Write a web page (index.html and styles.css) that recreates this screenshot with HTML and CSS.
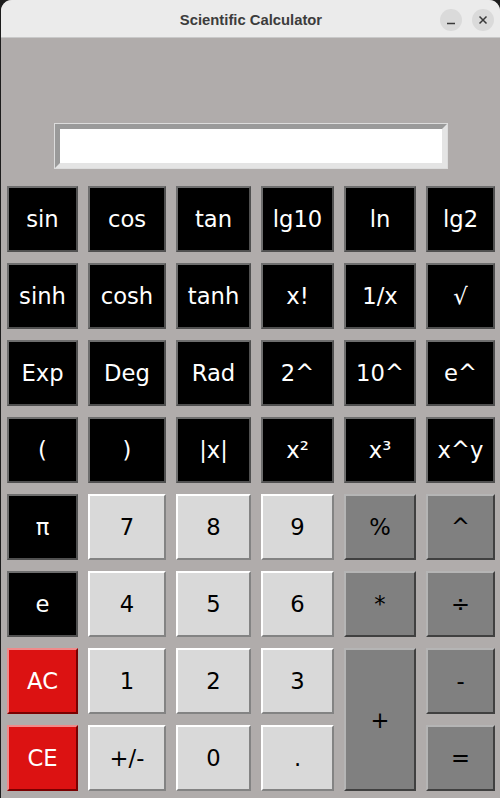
FILE: index.html
```html
<!DOCTYPE html>
<html>
<head>
<meta charset="utf-8">
<link rel="stylesheet" href="styles.css">
</head>
<body>
<div class="window">
  <div class="titlebar">
    <span class="title">Scientific Calculator</span>
    <div class="controls">
      <span class="ctl"><svg width="22" height="22" viewBox="0 0 22 22"><line x1="7" y1="14.5" x2="15" y2="14.5" stroke="#3a3a3a" stroke-width="1.5"/></svg></span>
      <span class="ctl"><svg width="22" height="22" viewBox="0 0 22 22"><path d="M7.5 7.5 L14.5 14.5 M14.5 7.5 L7.5 14.5" stroke="#3a3a3a" stroke-width="1.5"/></svg></span>
    </div>
  </div>
  <div class="main">
    <div class="display"><div class="field"></div></div>
    <div class="keys">
      <button class="k dark">sin</button>
      <button class="k dark">cos</button>
      <button class="k dark">tan</button>
      <button class="k dark">lg10</button>
      <button class="k dark">ln</button>
      <button class="k dark">lg2</button>

      <button class="k dark">sinh</button>
      <button class="k dark">cosh</button>
      <button class="k dark">tanh</button>
      <button class="k dark">x!</button>
      <button class="k dark">1/x</button>
      <button class="k dark">√</button>

      <button class="k dark">Exp</button>
      <button class="k dark">Deg</button>
      <button class="k dark">Rad</button>
      <button class="k dark">2^</button>
      <button class="k dark">10^</button>
      <button class="k dark">e^</button>

      <button class="k dark">(</button>
      <button class="k dark">)</button>
      <button class="k dark">|x|</button>
      <button class="k dark">x²</button>
      <button class="k dark">x³</button>
      <button class="k dark">x^y</button>

      <button class="k dark">π</button>
      <button class="k light">7</button>
      <button class="k light">8</button>
      <button class="k light">9</button>
      <button class="k op">%</button>
      <button class="k op">^</button>

      <button class="k dark">e</button>
      <button class="k light">4</button>
      <button class="k light">5</button>
      <button class="k light">6</button>
      <button class="k op">*</button>
      <button class="k op">÷</button>

      <button class="k red">AC</button>
      <button class="k light">1</button>
      <button class="k light">2</button>
      <button class="k light">3</button>
      <button class="k op plus">+</button>
      <button class="k op">-</button>

      <button class="k red">CE</button>
      <button class="k light">+/-</button>
      <button class="k light">0</button>
      <button class="k light">.</button>
      <button class="k op">=</button>
    </div>
  </div>
</div>
</body>
</html>
```
FILE: styles.css
```css
html, body {
  margin: 0;
  padding: 0;
  background: #1c1c1c;
  width: 500px;
  height: 798px;
  overflow: hidden;
}
.window {
  margin-left: 1px;
  width: 499px;
  height: 798px;
  background: #b0acab;
  border-radius: 11px 11px 0 0;
  overflow: hidden;
}
.titlebar {
  height: 37px;
  background: #ebebeb;
  border-bottom: 1px solid #c9c9c9;
  display: flex;
  align-items: center;
  justify-content: center;
  position: relative;
}
.title {
  font-family: "Liberation Sans", "DejaVu Sans", sans-serif;
  font-weight: bold;
  font-size: 14.8px;
  color: #3c3c3c;
  margin-left: 1px;
  margin-top: 3px;
}
.controls {
  position: absolute;
  right: 6px;
  top: 9px;
  display: flex;
  gap: 10px;
}
.ctl {
  width: 22px;
  height: 22px;
  border-radius: 50%;
  background: #dadada;
  display: flex;
}
.main {
  padding-top: 85px;
}
.display {
  width: 392px;
  height: 44px;
  margin-left: 53px;
  border: 1px solid #dcdcdc;
}
.field {
  height: 34px;
  background: #ffffff;
  border: 5px solid;
  border-color: #9a9a9a #e4e4e4 #e4e4e4 #9a9a9a;
}
.keys {
  margin-top: 17px;
  margin-left: 6px;
  display: grid;
  grid-template-columns: 71px 78px 75px 73px 72px 69px;
  grid-template-rows: repeat(8, 66px);
  column-gap: 10px;
  row-gap: 11px;
}
.k {
  margin: 0;
  padding: 0;
  font-family: "DejaVu Sans", sans-serif;
  font-size: 22.67px;
  border: 2px solid;
  display: flex;
  align-items: center;
  justify-content: center;
  cursor: pointer;
}
.dark {
  background: #000000;
  color: #ffffff;
  border-color: #6e6e6e #505050 #505050 #6e6e6e;
}
.light {
  background: #d9d9d9;
  color: #000000;
  border-color: #ffffff #838383 #838383 #ffffff;
}
.op {
  background: #808080;
  color: #000000;
  border-color: #b5b5b5 #404040 #404040 #b5b5b5;
}
.red {
  background: #dc1212;
  color: #ffffff;
  border-color: #f08a8a #7a0000 #7a0000 #f08a8a;
}
.plus {
  grid-row: span 2;
}
```
